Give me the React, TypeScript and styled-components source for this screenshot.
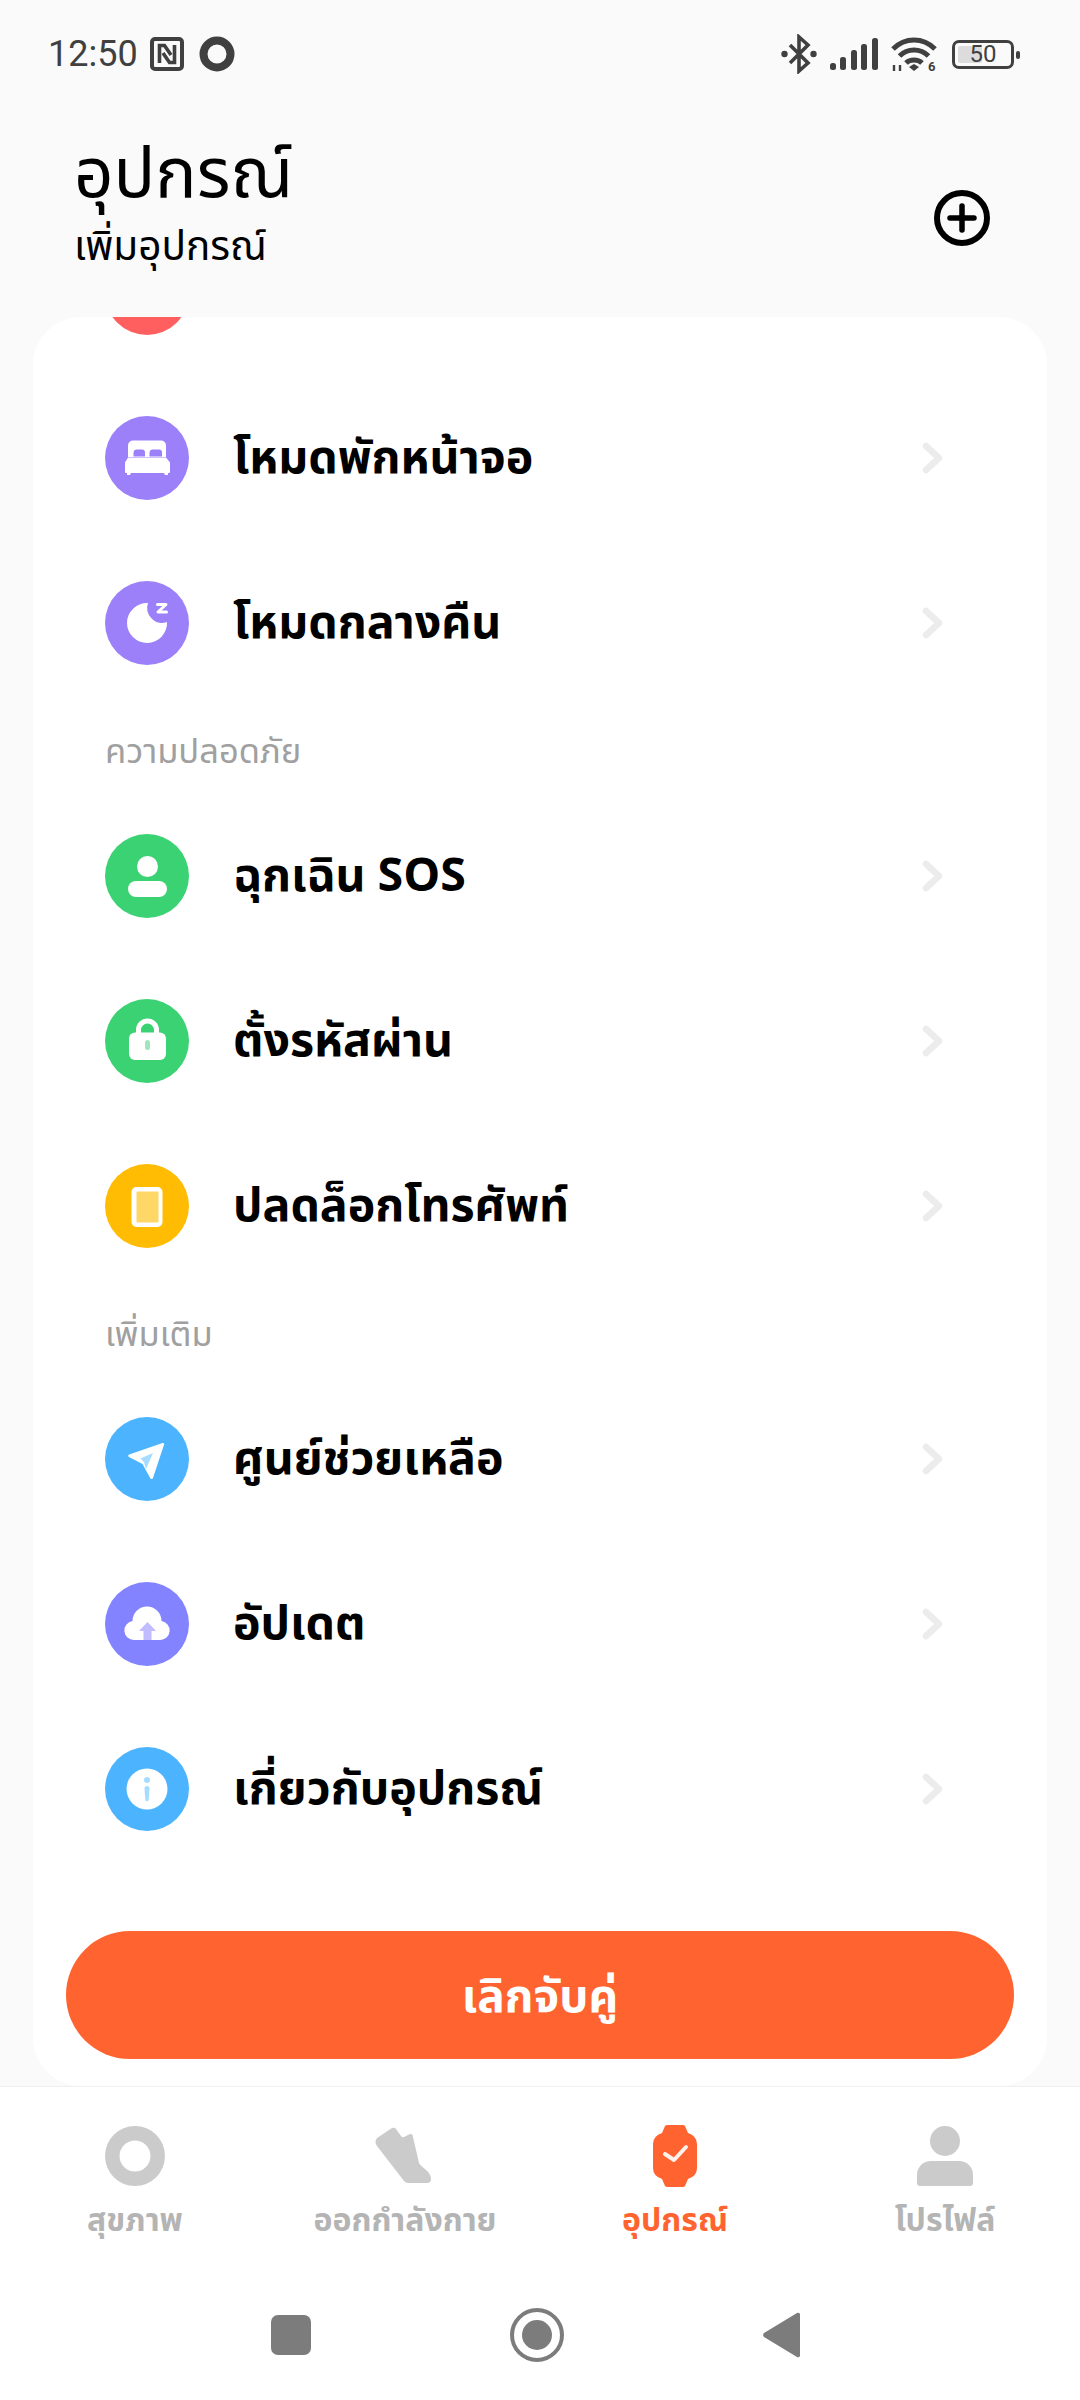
import React from 'react'
import styled, { createGlobalStyle } from 'styled-components'

const FONT = `'Noto Sans Thai', 'Noto Sans', Roboto, 'Liberation Sans', sans-serif`

const GlobalStyle = createGlobalStyle`
  html, body {
    margin: 0;
    padding: 0;
    background: #fafafa;
  }
  * {
    box-sizing: border-box;
  }
`

const S_Screen = styled.div`
  width: 1080px;
  height: 2400px;
  display: flex;
  flex-direction: column;
  overflow: hidden;
  background: #fafafa;
  font-family: ${FONT};
`

const S_StatusBar = styled.div`
  height: 108px;
  padding: 0 66px 0 48px;
  display: flex;
  align-items: center;
  justify-content: space-between;
  color: #404040;
`

const S_StatusGroup = styled.div`
  display: flex;
  align-items: center;
  gap: ${props => props.$gap}px;
`

const S_Time = styled.span`
  font-family: Roboto, sans-serif;
  font-size: 36px;
  line-height: 40px;
  margin-right: -3px;
`

const S_Header = styled.div`
  height: 209px;
  padding: 26px 90px 0 74px;
  display: flex;
  justify-content: space-between;
  align-items: flex-start;
`

const S_Title = styled.div`
  font-size: 69px;
  line-height: 84px;
  color: #000;
`

const S_SubTitle = styled.div`
  font-size: 40.5px;
  line-height: 52px;
  margin-top: 4px;
  color: #000;
`

const S_AddButton = styled.div`
  margin-top: 56px;
  width: 56px;
  height: 56px;
`

const S_Card = styled.div`
  margin: 0 33px;
  height: 1769px;
  background: #fff;
  border-radius: 48px;
  overflow: hidden;
  display: flex;
  flex-direction: column;
`

const S_List = styled.div`
  margin-top: -107px;
  display: flex;
  flex-direction: column;
`

const S_Row = styled.div`
  height: 165px;
  padding: 0 103px 0 72px;
  display: flex;
  align-items: center;
  flex-shrink: 0;
`

const S_IconCircle = styled.div`
  width: 84px;
  height: 84px;
  border-radius: 50%;
  background: ${props => props.$color};
  display: flex;
  align-items: center;
  justify-content: center;
  flex-shrink: 0;
`

const S_RowLabel = styled.div`
  margin-left: 44px;
  padding-top: 3px;
  flex: 1;
  font-size: 46.5px;
  line-height: 60px;
  font-weight: 700;
  color: #000;
`

const S_SectionTitle = styled.div`
  height: 47px;
  margin: 24px 0 17px 72px;
  font-size: 34.5px;
  line-height: 47px;
  color: #a0a0a0;
`

const S_UnbindButton = styled.div`
  margin: auto 33px 27px;
  height: 128px;
  padding-top: 5px;
  flex-shrink: 0;
  border-radius: 64px;
  background: #ff6430;
  color: #fff;
  font-size: 46px;
  font-weight: 700;
  display: flex;
  align-items: center;
  justify-content: center;
`

const S_NavBar = styled.div`
  height: 198px;
  padding-top: 38px;
  border-top: 1px solid #f0f0f0;
  background: #fff;
  display: grid;
  grid-template-columns: repeat(4, 270px);
`

const S_NavItem = styled.div`
  display: flex;
  flex-direction: column;
  align-items: center;
  gap: 13px;
`

const S_NavIcon = styled.div`
  height: 62px;
  display: flex;
  align-items: center;
  justify-content: center;
`

const S_NavLabel = styled.div`
  font-size: 32px;
  line-height: 42px;
  font-weight: 700;
  color: ${props => (props.$active ? '#ff6430' : '#b4b4b4')};
`

const S_SystemBar = styled.div`
  flex: 1;
  background: #fff;
  padding: 0 10px 14px 0;
  display: flex;
  justify-content: center;
  align-items: center;
  gap: 199px;
`

const Chevron = () => (
  <svg width="22" height="34" viewBox="0 0 22 34">
    <path d="M4 5l13 12L4 29" fill="none" stroke="#ececec" strokeWidth="6.5" strokeLinecap="round" strokeLinejoin="round" />
  </svg>
)

const BedIcon = () => (
  <svg width="48" height="48" viewBox="0 0 48 48">
    <path d="M10 6.5h28a5 5 0 0 1 5 5V23H5V11.5a5 5 0 0 1 5-5z" fill="#fff" />
    <path d="M13 15.5h6a3 3 0 0 1 3 3v4H10.5v-4a3 3 0 0 1 2.5-3z" fill="#9b80f9" />
    <path d="M29 15.5h7a3 3 0 0 1 3 3v4H26.5v-4a3 3 0 0 1 2.5-3z" fill="#9b80f9" />
    <path d="M5 23.5h38l4 5V38a1 1 0 0 1-1 1h-1v2h-3l-1-2H8l-1 2H4v-2H3a1 1 0 0 1-1-1v-9.500z" fill="#fff" />
  </svg>
)

const MoonIcon = () => (
  <svg width="48" height="48" viewBox="0 0 48 48">
    <path d="M25 4A20 20 0 1 0 44 23 15 15 0 0 1 25 4z" fill="#fff" />
    <path d="M34.500 5.500h8.500l-8 7.500h8.500" fill="none" stroke="#fff" strokeWidth="3" strokeLinecap="round" strokeLinejoin="round" />
  </svg>
)

const PersonIcon = () => (
  <svg width="48" height="48" viewBox="0 0 48 48">
    <circle cx="24.500" cy="14.500" r="10.500" fill="#fff" />
    <rect x="5" y="29" width="39" height="16" rx="8" fill="#fff" />
  </svg>
)

const LockIcon = () => (
  <svg width="48" height="48" viewBox="0 0 48 48">
    <path d="M15.500 18v-5a9 9 0 0 1 18 0v5" fill="none" stroke="#fff" strokeWidth="5" />
    <rect x="6" y="15.500" width="37" height="27.500" rx="6" fill="#fff" />
    <rect x="22" y="23" width="5" height="10" rx="2.500" fill="#9fe6bc" />
  </svg>
)

const PhoneIcon = () => (
  <svg width="48" height="48" viewBox="0 0 48 48">
    <rect x="8.500" y="5" width="31" height="40" rx="5" fill="#fff" />
    <rect x="13.500" y="9.500" width="22" height="31" rx="1" fill="#ffd766" />
  </svg>
)

const SendIcon = () => (
  <svg width="48" height="48" viewBox="0 0 48 48">
    <path d="M39.500 8a1.200 1.200 0 0 1 1.600 1.500L30 43a1.500 1.500 0 0 1-2.700.3L19.500 29 6 22a1.400 1.400 0 0 1 .2-2.600z" fill="#fff" />
    <path d="M30 18L17.500 23.500 21 27l2 7z" fill="#a5dcff" />
  </svg>
)

const CloudIcon = () => (
  <svg width="48" height="48" viewBox="0 0 48 48">
    <path d="M11 40a9.500 9.500 0 0 1-1.500-18.900A14.500 14.500 0 0 1 38.500 21.100 9.500 9.500 0 0 1 37 40z" fill="#fff" />
    <path d="M24.500 22l8.500 9h-4.500v9h-8v-9H16z" fill="#c0bcff" />
  </svg>
)

const InfoIcon = () => (
  <svg width="48" height="48" viewBox="0 0 48 48">
    <circle cx="24" cy="24" r="20.500" fill="#fff" />
    <circle cx="24" cy="15" r="3" fill="#a5dcff" />
    <path d="M21.500 23.500a2.500 2.500 0 0 1 5 0l-.8 11a1.700 1.700 0 0 1-3.400 0z" fill="#a5dcff" />
  </svg>
)

const NfcIcon = () => (
  <svg width="34" height="34" viewBox="0 0 34 34" fill="none" stroke="#404040">
    <rect x="2" y="2" width="30" height="30" rx="3" strokeWidth="4" />
    <path d="M9.500 26V8.500h5L21 18" strokeWidth="3.600" />
    <path d="M24.500 8v17.500h-5L13 16" strokeWidth="3.600" />
  </svg>
)

const RingIcon = () => (
  <svg width="36" height="36" viewBox="0 0 36 36">
    <circle cx="18" cy="18" r="13.500" fill="none" stroke="#404040" strokeWidth="8" />
  </svg>
)

const BluetoothIcon = () => (
  <svg width="36" height="40" viewBox="0 0 36 40">
    <path d="M9 11l18 18-9 8V3l9 8L9 29" fill="none" stroke="#404040" strokeWidth="3.600" />
    <circle cx="3.500" cy="20" r="3.200" fill="#404040" />
    <circle cx="32.500" cy="20" r="3.200" fill="#404040" />
  </svg>
)

const SignalIcon = () => (
  <svg width="48" height="32" viewBox="0 0 48 32" fill="#404040">
    <rect x="0" y="25" width="6" height="7" rx="2.500" />
    <rect x="10" y="19" width="6" height="13" rx="2.500" />
    <rect x="21" y="12" width="6" height="20" rx="2.500" />
    <rect x="31" y="6" width="6" height="26" rx="2.500" />
    <rect x="42" y="0" width="6" height="32" rx="2.500" />
  </svg>
)

const WifiIcon = () => (
  <svg width="46" height="40" viewBox="0 -2 46 40" fill="none" stroke="#404040" strokeWidth="5">
    <path d="M2 13c12-12 30-12 42 0" />
    <path d="M8.500 20c8-8 21-8 29 0" />
    <path d="M15 27c4-4 12-4 16 0" />
    <path d="M23 35l-5-4 5-3 5 3z" fill="#404040" stroke="none" />
    <path d="M3 29v6M9 35v-6" strokeWidth="2.400" />
    <text x="37" y="35" fontFamily="Roboto, sans-serif" fontSize="13" fontWeight="700" fill="#404040" stroke="none">6</text>
  </svg>
)

const S_Battery = styled.div`
  position: relative;
  width: 62px;
  height: 29px;
  margin-left: 2px;
  border: 3px solid #404040;
  border-radius: 7px;
  font-family: Roboto, sans-serif;
  font-size: 24px;
  line-height: 23px;
  text-align: center;
  color: #404040;
  &::before {
    content: '';
    position: absolute;
    left: 3px;
    top: 3px;
    bottom: 3px;
    width: 24px;
    background: #dcdcdc;
    border-radius: 2px;
  }
  &::after {
    content: '';
    position: absolute;
    right: -9px;
    top: 8px;
    width: 4px;
    height: 8px;
    background: #404040;
    border-radius: 2px;
  }
`

const S_BatteryText = styled.span`
  position: relative;
`

const PlusIcon = () => (
  <svg width="56" height="56" viewBox="0 0 56 56" fill="none" stroke="#000">
    <circle cx="28" cy="28" r="25" strokeWidth="6" />
    <path d="M28 16v24M16 28h24" strokeWidth="5.500" strokeLinecap="round" />
  </svg>
)

const NavRing = () => (
  <svg width="60" height="60" viewBox="0 0 60 60">
    <circle cx="30" cy="30" r="22.700" fill="none" stroke="#cbcbcb" strokeWidth="14.500" />
  </svg>
)

const NavShoe = () => (
  <svg width="60" height="60" viewBox="0 0 60 60">
    <path d="M2 12L17 2q3-1 4 1l5 7q1 2 3 1l6-3q3 0 3 3l6 26q1 2 6 6q6 5 6 10q0 4-4 4H33q-2 0-4-2L2 20q-3-4 0-8z" fill="#cbcbcb" />
  </svg>
)

const NavWatch = () => (
  <svg width="44" height="62" viewBox="0 0 44 62">
    <path d="M12 1q1-1 2-1h16q1 0 2 1l3 7q9 3 9 11v24q0 8-9 11l-3 7q-1 1-2 1H14q-1 0-2-1l-3-7q-9-3-9-11V19q0-8 9-11z" fill="#ff6430" />
    <path d="M12 29l9 6 12-13" fill="none" stroke="#fff2ec" strokeWidth="4" strokeLinecap="round" strokeLinejoin="round" />
  </svg>
)

const NavPerson = () => (
  <svg width="56" height="60" viewBox="0 0 56 60" fill="#cbcbcb">
    <circle cx="28" cy="15" r="15" />
    <path d="M14 35h28a14 14 0 0 1 14 14v8a3 3 0 0 1-3 3H3a3 3 0 0 1-3-3v-8a14 14 0 0 1 14-14z" />
  </svg>
)

const SYSTEM_COLOR = '#7c7c7c'

const SectionOne = [
  { label: 'โหมดพักหน้าจอ', color: '#9b80f9', icon: <BedIcon /> },
  { label: 'โหมดกลางคืน', color: '#9b80f9', icon: <MoonIcon /> },
]
const SectionTwo = [
  { label: 'ฉุกเฉิน SOS', color: '#3bd273', icon: <PersonIcon /> },
  { label: 'ตั้งรหัสผ่าน', color: '#3bd273', icon: <LockIcon /> },
  { label: 'ปลดล็อกโทรศัพท์', color: '#ffbc03', icon: <PhoneIcon /> },
]
const SectionThree = [
  { label: 'ศูนย์ช่วยเหลือ', color: '#4cb4ff', icon: <SendIcon /> },
  { label: 'อัปเดต', color: '#8383ff', icon: <CloudIcon /> },
  { label: 'เกี่ยวกับอุปกรณ์', color: '#4cb4ff', icon: <InfoIcon /> },
]

const NavItems = [
  { label: 'สุขภาพ', icon: <NavRing /> },
  { label: 'ออกกำลังกาย', icon: <NavShoe /> },
  { label: 'อุปกรณ์', icon: <NavWatch />, active: true },
  { label: 'โปรไฟล์', icon: <NavPerson /> },
]

function renderRows(rows: { label: string; color: string; icon: React.ReactNode }[]) {
  return rows.map(row => (
    <S_Row key={row.label}>
      <S_IconCircle $color={row.color}>{row.icon}</S_IconCircle>
      <S_RowLabel>{row.label}</S_RowLabel>
      <Chevron />
    </S_Row>
  ))
}

export default function App() {
  return (
    <S_Screen>
      <GlobalStyle />
      <S_StatusBar>
        <S_StatusGroup $gap={15}>
          <S_Time>12:50</S_Time>
          <NfcIcon />
          <RingIcon />
        </S_StatusGroup>
        <S_StatusGroup $gap={13}>
          <BluetoothIcon />
          <SignalIcon />
          <WifiIcon />
          <S_Battery>
            <S_BatteryText>50</S_BatteryText>
          </S_Battery>
        </S_StatusGroup>
      </S_StatusBar>

      <S_Header>
        <div>
          <S_Title>อุปกรณ์</S_Title>
          <S_SubTitle>เพิ่มอุปกรณ์</S_SubTitle>
        </div>
        <S_AddButton>
          <PlusIcon />
        </S_AddButton>
      </S_Header>

      <S_Card>
        <S_List>
          <S_Row>
            <S_IconCircle $color="#ff5f5f" />
          </S_Row>
          {renderRows(SectionOne)}
          <S_SectionTitle>ความปลอดภัย</S_SectionTitle>
          {renderRows(SectionTwo)}
          <S_SectionTitle>เพิ่มเติม</S_SectionTitle>
          {renderRows(SectionThree)}
        </S_List>
        <S_UnbindButton>เลิกจับคู่</S_UnbindButton>
      </S_Card>

      <S_NavBar>
        {NavItems.map(item => (
          <S_NavItem key={item.label}>
            <S_NavIcon>{item.icon}</S_NavIcon>
            <S_NavLabel $active={item.active}>{item.label}</S_NavLabel>
          </S_NavItem>
        ))}
      </S_NavBar>

      <S_SystemBar>
        <svg width="40" height="40" viewBox="0 0 40 40">
          <rect width="40" height="40" rx="7" fill={SYSTEM_COLOR} />
        </svg>
        <svg width="54" height="54" viewBox="0 0 54 54" fill="none">
          <circle cx="27" cy="27" r="25" stroke={SYSTEM_COLOR} strokeWidth="4" />
          <circle cx="27" cy="27" r="15" fill={SYSTEM_COLOR} />
        </svg>
        <svg width="37" height="46" viewBox="0 0 37 46">
          <path d="M34 1a2 2 0 0 1 3 2v40a2 2 0 0 1-3 2L1 25a3 3 0 0 1 0-4z" fill={SYSTEM_COLOR} />
        </svg>
      </S_SystemBar>
    </S_Screen>
  )
}
